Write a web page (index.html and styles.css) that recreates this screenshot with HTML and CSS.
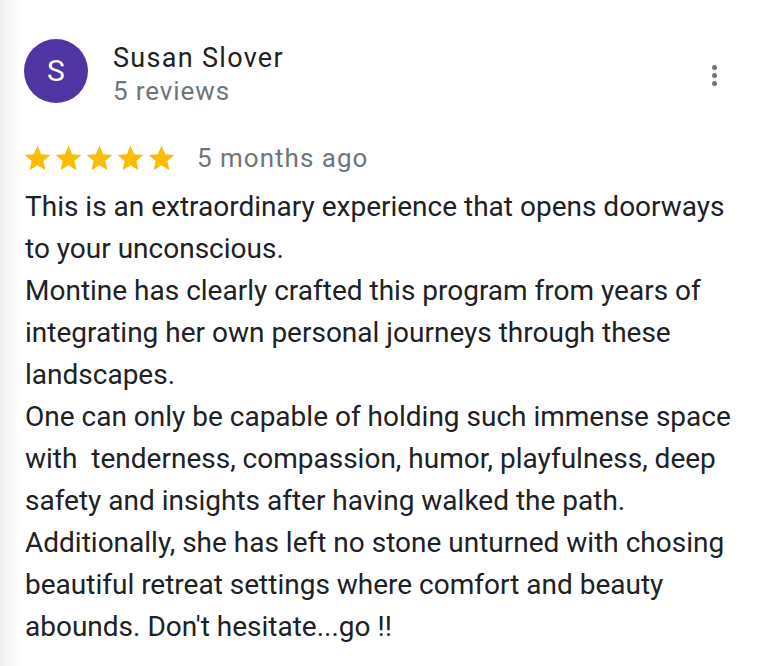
FILE: index.html
```html
<!DOCTYPE html>
<html>
<head>
<meta charset="utf-8">
<link rel="stylesheet" href="styles.css">
</head>
<body>
<div class="review">
  <div class="header">
    <div class="avatar">S</div>
    <div class="who">
      <div class="name">Susan Slover</div>
      <div class="count">5 reviews</div>
    </div>
    <div class="more" aria-label="More">
      <span class="dot"></span><span class="dot"></span><span class="dot"></span>
    </div>
  </div>
  <div class="meta">
    <div class="stars">
      <svg viewBox="0 0 24 24" class="star"><path d="M12 17.27L18.18 21l-1.64-7.03L22 9.24l-7.19-.61L12 2 9.19 8.63 2 9.24l5.46 4.73L5.82 21z"/></svg>
      <svg viewBox="0 0 24 24" class="star"><path d="M12 17.27L18.18 21l-1.64-7.03L22 9.24l-7.19-.61L12 2 9.19 8.63 2 9.24l5.46 4.73L5.82 21z"/></svg>
      <svg viewBox="0 0 24 24" class="star"><path d="M12 17.27L18.18 21l-1.64-7.03L22 9.24l-7.19-.61L12 2 9.19 8.63 2 9.24l5.46 4.73L5.82 21z"/></svg>
      <svg viewBox="0 0 24 24" class="star"><path d="M12 17.27L18.18 21l-1.64-7.03L22 9.24l-7.19-.61L12 2 9.19 8.63 2 9.24l5.46 4.73L5.82 21z"/></svg>
      <svg viewBox="0 0 24 24" class="star"><path d="M12 17.27L18.18 21l-1.64-7.03L22 9.24l-7.19-.61L12 2 9.19 8.63 2 9.24l5.46 4.73L5.82 21z"/></svg>
    </div>
    <span class="date">5 months ago</span>
  </div>
  <p class="text">This is an extraordinary experience that opens doorways to your unconscious.<br>Montine has clearly crafted this program from years of integrating her own personal journeys through these landscapes.<br>One can only be capable of holding such immense space with&nbsp; tenderness, compassion, humor, playfulness, deep safety and insights after having walked the path.<br>Additionally, she has left no stone unturned with chosing beautiful retreat settings where comfort and beauty abounds. Don't hesitate...go !!</p>
</div>
</body>
</html>
```
FILE: styles.css
```css
html, body {
  margin: 0;
  padding: 0;
}
body {
  width: 762px;
  height: 666px;
  overflow: hidden;
  background: linear-gradient(to right, #efefef 0px, #f8f8f8 10px, #ffffff 24px);
  font-family: Roboto, "Liberation Sans", Arial, sans-serif;
  color: #202124;
}
.review {
  padding: 39px 0 0 24px;
}
.header {
  display: flex;
  align-items: flex-start;
  width: 693px;
}
.avatar {
  width: 64px;
  height: 64px;
  border-radius: 50%;
  background: #5034a2;
  color: #fff;
  font-size: 30px;
  line-height: 64px;
  text-align: center;
  flex: none;
}
.who {
  margin-left: 25px;
  flex: 1;
  padding-top: 3px;
}
.name {
  font-size: 27px;
  letter-spacing: 1.3px;
  line-height: 33px;
  color: #202124;
}
.count {
  font-size: 26px;
  letter-spacing: 0.9px;
  line-height: 33px;
  color: #70757a;
}
.more {
  display: flex;
  flex-direction: column;
  gap: 3px;
  padding-top: 26px;
}
.dot {
  width: 5px;
  height: 5px;
  border-radius: 50%;
  background: #70757a;
  display: block;
}
.meta {
  display: flex;
  align-items: center;
  margin-top: 35px;
  height: 30px;
}
.stars {
  display: flex;
  margin-left: -2px;
}
.star {
  width: 31px;
  height: 31px;
  fill: #fbbc04;
  display: block;
}
.date {
  margin-left: 20px;
  font-size: 26px;
  letter-spacing: 1px;
  color: #70757a;
}
.text {
  margin: 13px 0 0 1px;
  font-size: 28px;
  line-height: 42px;
  color: #202124;
  width: 720px;
}
```
